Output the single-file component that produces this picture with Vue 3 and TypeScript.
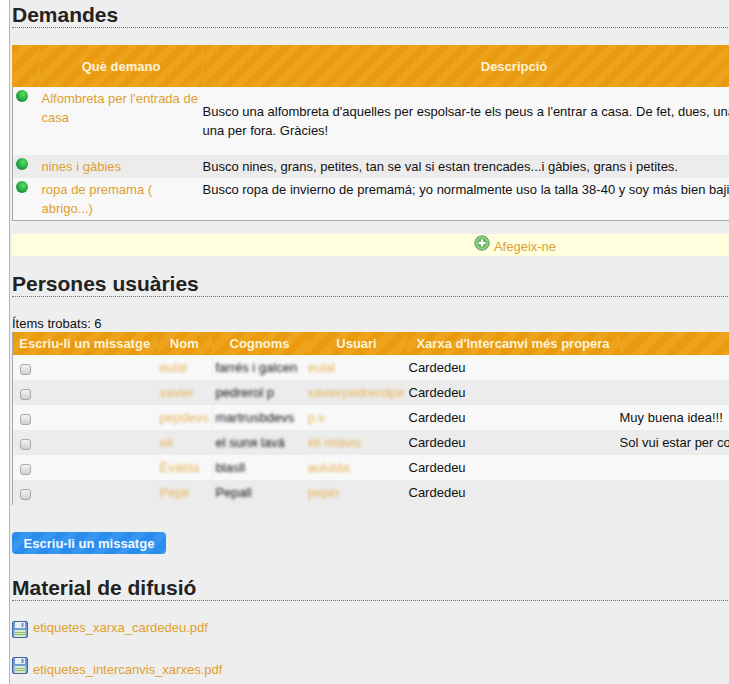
<script setup lang="ts">
interface Demand {
  title: string
  text: string
}

interface User {
  name: string
  surname: string
  login: string
  note: string
}

const demands: Demand[] = [
  {
    title: "Alfombreta per l'entrada de casa",
    text: "Busco una alfombreta d'aquelles per espolsar-te els peus a l'entrar a casa. De fet, dues, una per dins i una per fora. Gràcies!",
  },
  {
    title: 'nines i gàbies',
    text: 'Busco nines, grans, petites, tan se val si estan trencades...i gàbies, grans i petites.',
  },
  {
    title: 'ropa de premama ( abrigo...)',
    text: 'Busco ropa de invierno de premamá; yo normalmente uso la talla 38-40 y soy más bien bajita.',
  },
]

const users: User[] = [
  { name: 'eulal', surname: 'farrés i galcen', login: 'eulal', note: '' },
  { name: 'xavier', surname: 'pedrerol p', login: 'xavierpedrerolpe', note: '' },
  { name: 'pepdevs', surname: 'martrusbdevs', login: 'p.v', note: 'Muy buena idea!!!' },
  { name: 'eli', surname: 'el sunя lavá', login: 'eli mlavis', note: 'Sol vui estar per col·laborar amb la xarxa' },
  { name: 'Èvalda', surname: 'blasll', login: 'aululda', note: '' },
  { name: 'Pepit', surname: 'Pepall', login: 'pepin', note: '' },
]

const files: string[] = ['etiquetes_xarxa_cardedeu.pdf', 'etiquetes_intercanvis_xarxes.pdf']
</script>

<template>
  <div class="page">
    <div class="main">
      <h2 class="title first">Demandes</h2>

      <table class="grid demands">
        <colgroup>
          <col style="width: 27px" />
          <col style="width: 163px" />
          <col style="width: 623px" />
          <col />
        </colgroup>
        <thead>
          <tr>
            <th></th>
            <th>Què demano</th>
            <th>Descripció</th>
            <th></th>
          </tr>
        </thead>
        <tbody>
          <tr v-for="d in demands" :key="d.title">
            <td class="dot-cell"><span class="dot"></span></td>
            <td class="demand-title"><a>{{ d.title }}</a></td>
            <td class="demand-text">{{ d.text }}</td>
            <td></td>
          </tr>
        </tbody>
      </table>

      <div class="add-bar">
        <svg class="plus" width="16" height="16" viewBox="0 0 16 16">
          <circle cx="8" cy="8" r="7.2" fill="#8fcf8a" stroke="#5a9a58" />
          <circle cx="8" cy="8" r="5" fill="#6dbb6a" />
          <path d="M8 4.5v7M4.5 8h7" stroke="#fff" stroke-width="2" />
        </svg>
        <a>Afegeix-ne</a>
      </div>

      <h2 class="title">Persones usuàries</h2>

      <div class="found">Ítems trobats: 6</div>

      <table class="grid users">
        <colgroup>
          <col style="width: 144px" />
          <col style="width: 56px" />
          <col style="width: 94px" />
          <col style="width: 100px" />
          <col style="width: 213px" />
          <col />
        </colgroup>
        <thead>
          <tr>
            <th>Escriu-li un missatge</th>
            <th>Nom</th>
            <th>Cognoms</th>
            <th>Usuari</th>
            <th>Xarxa d'Intercanvi més propera</th>
            <th></th>
          </tr>
        </thead>
        <tbody>
          <tr v-for="u in users" :key="u.login">
            <td class="check-cell"><input type="checkbox" class="check" /></td>
            <td><span class="blur link">{{ u.name }}</span></td>
            <td><span class="blur">{{ u.surname }}</span></td>
            <td><span class="blur link">{{ u.login }}</span></td>
            <td>Cardedeu</td>
            <td>{{ u.note }}</td>
          </tr>
        </tbody>
      </table>

      <button class="send">Escriu-li un missatge</button>

      <h2 class="title">Material de difusió</h2>

      <div class="files">
        <div v-for="f in files" :key="f" class="file">
          <svg class="floppy" width="16" height="17" viewBox="0 0 16 17">
            <rect x="0.5" y="0.5" width="15" height="16" rx="1.5" fill="#6f9bd6" stroke="#3f66a3" />
            <rect x="3" y="1" width="10" height="6" fill="#e8eef7" />
            <rect x="9.5" y="2" width="2" height="4" fill="#6f8fbf" />
            <rect x="2.5" y="9" width="11" height="7" fill="#d9ecc8" />
            <path d="M3 11.5h10M3 13.5h10" stroke="#8dbb74" />
          </svg>
          <a>{{ f }}</a>
        </div>
      </div>
    </div>
  </div>
</template>

<style>
html,
body {
  margin: 0;
  background: #fff;
}
</style>

<style scoped>
.page {
  width: 729px;
  height: 684px;
  overflow: hidden;
  padding-left: 9px;
  box-sizing: border-box;
  font-family: "Liberation Sans", Arial, sans-serif;
  font-size: 13px;
  color: #111;
}

.main {
  width: 1030px;
  height: 684px;
  box-sizing: border-box;
  padding-left: 2px;
  border-left: 1px solid #b5b5b5;
  background: #eee;
}

.title {
  width: 1006px;
  margin: 0;
  padding-top: 16px;
  font-size: 21px;
  line-height: 24px;
  font-weight: bold;
  color: #222;
  border-bottom: 1px dotted #777;
}

.title.first {
  padding-top: 3px;
}

.grid {
  width: 1006px;
  table-layout: fixed;
  border-collapse: collapse;
  border-left: 1px solid #aaa;
}

.grid th {
  padding: 0;
  color: #fdf3d8;
  font-weight: bold;
  text-align: center;
  background: repeating-linear-gradient(135deg, #e99a0e 0 7px, #eea31d 7px 14px);
}

.demands {
  margin-top: 17px;
  border-bottom: 1px solid #aaa;
}

.demands th {
  height: 42px;
  border-left: 1px solid #eda31f;
}

.demands td {
  padding: 0;
  line-height: 19px;
  background: #f8f8f8;
}

.demands tr:nth-child(2) td {
  background: #ececec;
}

.dot-cell {
  vertical-align: top;
}

.dot {
  display: block;
  width: 12px;
  height: 12px;
  margin: 3px 0 0 3px;
  border-radius: 50%;
  background: radial-gradient(circle at 60% 35%, #55e05a, #20a040 60%, #177a35);
}

.demand-title {
  vertical-align: top;
  padding: 2px 0 2px 2px !important;
}

.demand-title a,
.add-bar a {
  color: #dda032;
}

.demand-text {
  vertical-align: top;
  padding: 2px 0 !important;
}

.demands tr:first-child .demand-text {
  padding: 15px 30px 15px 0 !important;
}

.add-bar {
  display: flex;
  justify-content: center;
  align-items: flex-start;
  gap: 4px;
  width: 1006px;
  height: 22px;
  margin-top: 13px;
  background: #ffffe0;
  line-height: 25px;
}

.plus {
  margin-top: 1px;
}

.found {
  margin-top: 19px;
  line-height: 15px;
  height: 16px;
}

.users th {
  height: 23px;
  background: repeating-linear-gradient(135deg, #e99a0e 0 8px, #eea31d 8px 16px);
}

.users td {
  height: 25px;
  padding: 0;
  background: #f8f8f8;
  white-space: nowrap;
  overflow: hidden;
}

.users tr:nth-child(even) td {
  background: #ececec;
}

.users td:nth-child(2),
.users td:nth-child(3) {
  padding-left: 3px;
}

.users td:nth-child(4) {
  padding-left: 1px;
}

.users td:nth-child(5) {
  padding-left: 2px;
}

.blur {
  display: inline-block;
  filter: blur(1.4px);
}

.link {
  color: #e8b45a;
}

.check-cell {
  vertical-align: middle;
}

.check {
  appearance: none;
  display: block;
  width: 11px;
  height: 11px;
  margin: 3px 0 0 7px;
  border: 1px solid #a8a8a8;
  border-radius: 3px;
  box-sizing: border-box;
  background: linear-gradient(#f4f4f4, #cfcfcf);
}

.send {
  display: block;
  width: 154px;
  height: 22px;
  margin-top: 27px;
  margin-bottom: 6px;
  padding: 0;
  border: 0;
  border-radius: 4px;
  font-family: inherit;
  font-size: 13px;
  font-weight: bold;
  color: #f2f8ff;
  background: repeating-linear-gradient(135deg, #2a8cec 0 8px, #3696f0 8px 16px);
}

.files {
  padding-top: 19px;
}

.file {
  display: flex;
  align-items: flex-start;
  gap: 5px;
  margin-bottom: 19px;
}

.file:last-child {
  align-items: flex-end;
}

.file a {
  line-height: 15px;
  color: #dfa02c;
}

.file:first-child .floppy {
  margin-top: 1px;
}

.file:last-child a {
  position: relative;
  top: 3px;
}
</style>
